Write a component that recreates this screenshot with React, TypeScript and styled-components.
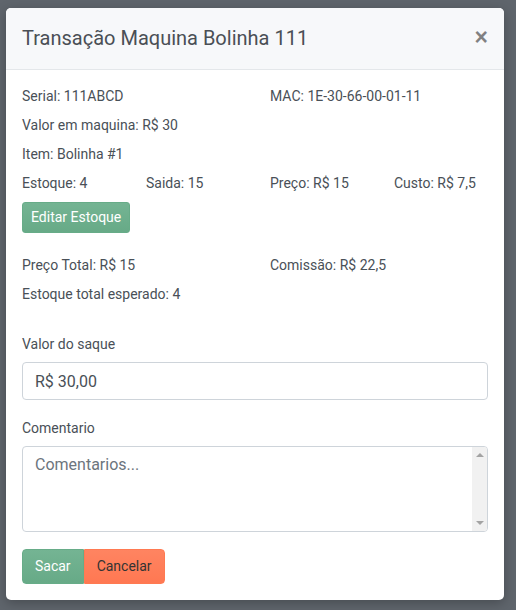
import React from "react";
import styled, { createGlobalStyle } from "styled-components";

const Global = createGlobalStyle`
  html, body { margin: 0; padding: 0; }
  body {
    background: #5f656c;
    font-family: Roboto, "Liberation Sans", sans-serif;
    color: #495057;
  }
  * { box-sizing: border-box; }
`;

const Backdrop = styled.div`
  width: 516px;
  height: 610px;
  padding: 8px 12px 10px 6px;
`;

const Modal = styled.div`
  width: 498px;
  height: 592px;
  background: #fff;
  border-radius: 5px;
  box-shadow: 0 3px 12px rgba(0, 0, 0, 0.25);
  display: flex;
  flex-direction: column;
  overflow: hidden;
`;

const Header = styled.div`
  height: 63px;
  background: #f7f8fa;
  border-bottom: 1px solid #e4e7ea;
  display: flex;
  align-items: center;
  justify-content: space-between;
  padding: 0 16px 1px 16px;
`;

const Title = styled.h5`
  margin: 0;
  font-size: 20px;
  font-weight: 400;
  line-height: 30px;
  color: #4a4f55;
`;

const Close = styled.button`
  border: 0;
  background: transparent;
  padding: 0;
  font-family: "Liberation Sans", Arial, sans-serif;
  font-size: 23px;
  font-weight: 700;
  line-height: 1;
  color: #000;
  opacity: 0.48;
  cursor: pointer;
  margin-top: -2px;
`;

const Body = styled.div`
  padding: 16px;
  display: flex;
  flex-direction: column;
`;

const Grid = styled.div`
  display: grid;
  grid-template-columns: 124px 124px 124px 1fr;
`;

const Item = styled.p<{ $span?: number }>`
  margin: 0 0 8px 0;
  font-size: 14px;
  line-height: 21px;
  grid-column: span ${(p) => p.$span ?? 1};
`;

const Button = styled.button<{ $variant: "green" | "orange" }>`
  font-family: Roboto, "Liberation Sans", sans-serif;
  font-size: 14px;
  line-height: 21px;
  border: 1px solid ${(p) => (p.$variant === "green" ? "#67ac88" : "#ff7a52")};
  background: ${(p) =>
    p.$variant === "green"
      ? "linear-gradient(#74b493, #67aa87)"
      : "linear-gradient(#ff8461, #ff7852)"};
  color: ${(p) => (p.$variant === "green" ? "#fff" : "#333")};
  cursor: pointer;
`;

const EditButton = styled(Button)`
  align-self: flex-start;
  height: 31px;
  padding: 0 8px;
  border-radius: 3px;
  margin-bottom: 22px;
`;

const Spacer = styled.div`
  height: 21px;
`;

const FormGroup = styled.div`
  display: flex;
  flex-direction: column;
  margin-bottom: 18px;
  &:last-of-type { margin-bottom: 17px; }
`;

const Label = styled.label`
  font-size: 14px;
  line-height: 21px;
  margin-bottom: 7px;
`;

const Input = styled.input`
  height: 38px;
  border: 1px solid #ced4da;
  border-radius: 4px;
  padding: 0 12px;
  font-family: Roboto, "Liberation Sans", sans-serif;
  font-size: 16px;
  color: #495057;
  outline: none;
`;

const TextAreaWrap = styled.div`
  position: relative;
  display: flex;
  flex-direction: column;
`;

const TextArea = styled.textarea`
  height: 86px;
  border: 1px solid #ced4da;
  border-radius: 4px;
  padding: 6px 28px 6px 12px;
  font-family: Roboto, "Liberation Sans", sans-serif;
  font-size: 16px;
  line-height: 24px;
  color: #495057;
  resize: none;
  overflow: hidden;
  outline: none;
  &::placeholder { color: #6c757d; }
`;

const ScrollTrack = styled.div`
  position: absolute;
  top: 1px;
  right: 1px;
  bottom: 1px;
  width: 15px;
  background: #f1f1f1;
  border-radius: 0 3px 3px 0;
  display: flex;
  flex-direction: column;
  justify-content: space-between;
  align-items: center;
  padding: 6px 0 6px 0;
  pointer-events: none;
`;

const Arrow = styled.span<{ $dir: "up" | "down" }>`
  width: 0;
  height: 0;
  border-left: 4px solid transparent;
  border-right: 4px solid transparent;
  ${(p) =>
    p.$dir === "up"
      ? "border-bottom: 4px solid #a3a3a3;"
      : "border-top: 4px solid #a3a3a3;"}
`;

const Actions = styled.div`
  display: flex;
  margin-top: -1px;
`;

const GroupButton = styled(Button)<{ $first?: boolean }>`
  height: 35px;
  padding: 0 12px;
  border-radius: ${(p) => (p.$first ? "4px 0 0 4px" : "0 4px 4px 0")};
`;

export default function App() {
  return (
    <>
      <Global />
      <Backdrop>
        <Modal>
          <Header>
            <Title>Transação Maquina Bolinha 111</Title>
            <Close aria-label="Fechar">×</Close>
          </Header>
          <Body>
            <Grid>
              <Item $span={2}>Serial: 111ABCD</Item>
              <Item $span={2}>MAC: 1E-30-66-00-01-11</Item>
              <Item $span={4}>Valor em maquina: R$ 30</Item>
              <Item $span={4}>Item: Bolinha #1</Item>
              <Item>Estoque: 4</Item>
              <Item>Saida: 15</Item>
              <Item>Preço: R$ 15</Item>
              <Item>Custo: R$ 7,5</Item>
            </Grid>
            <EditButton $variant="green">Editar Estoque</EditButton>
            <Grid>
              <Item $span={2}>Preço Total: R$ 15</Item>
              <Item $span={2}>Comissão: R$ 22,5</Item>
              <Item $span={4}>Estoque total esperado: 4</Item>
            </Grid>
            <Spacer />
            <FormGroup>
              <Label>Valor do saque</Label>
              <Input defaultValue="R$ 30,00" />
            </FormGroup>
            <FormGroup>
              <Label>Comentario</Label>
              <TextAreaWrap>
                <TextArea placeholder="Comentarios..." />
                <ScrollTrack>
                  <Arrow $dir="up" />
                  <Arrow $dir="down" />
                </ScrollTrack>
              </TextAreaWrap>
            </FormGroup>
            <Actions>
              <GroupButton $variant="green" $first>Sacar</GroupButton>
              <GroupButton $variant="orange">Cancelar</GroupButton>
            </Actions>
          </Body>
        </Modal>
      </Backdrop>
    </>
  );
}
